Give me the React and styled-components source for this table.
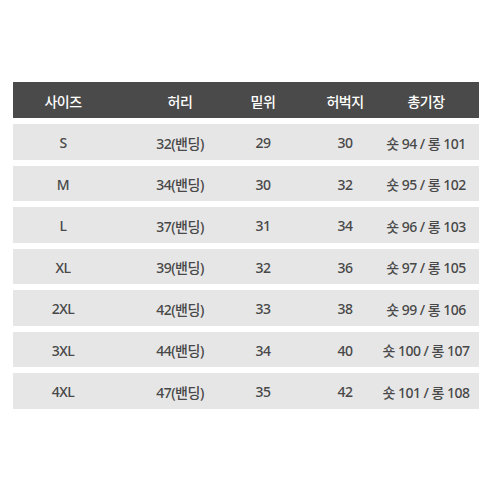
import React from "react";
import styled, { createGlobalStyle } from "styled-components";

const GlobalStyle = createGlobalStyle`
  html, body {
    margin: 0;
    padding: 0;
    background: #ffffff;
  }
  body {
    font-family: "Noto Sans", "Noto Sans CJK KR", sans-serif;
  }
`;

const Page = styled.div`
  width: 492px;
  height: 492px;
  padding: 82px 13px 0 13px;
  box-sizing: border-box;
`;

const Table = styled.div`
  width: 466px;
  display: flex;
  flex-direction: column;
  gap: 6px;
`;

const Body = styled.div`
  display: flex;
  flex-direction: column;
  gap: 6px;
`;

const Row = styled.div`
  display: grid;
  grid-template-columns: 100px 134px 32px 132px 30px;
  height: ${(p) => (p.$head ? "36px" : "35.5px")};
  background: ${(p) => (p.$head ? "#4a4a4a" : "#e6e6e6")};
  color: ${(p) => (p.$head ? "#ffffff" : "#484848")};
`;

const Cell = styled.div`
  display: flex;
  align-items: center;
  justify-content: center;
  white-space: nowrap;
  font-size: 14px;
  font-weight: 500;
  letter-spacing: -0.5px;
  padding-top: 2px;
`;

const head = ["사이즈", "허리", "밑위", "허벅지", "총기장"];
const rows = [
  ["S", "32(밴딩)", "29", "30", "숏 94 / 롱 101"],
  ["M", "34(밴딩)", "30", "32", "숏 95 / 롱 102"],
  ["L", "37(밴딩)", "31", "34", "숏 96 / 롱 103"],
  ["XL", "39(밴딩)", "32", "36", "숏 97 / 롱 105"],
  ["2XL", "42(밴딩)", "33", "38", "숏 99 / 롱 106"],
  ["3XL", "44(밴딩)", "34", "40", "숏 100 / 롱 107"],
  ["4XL", "47(밴딩)", "35", "42", "숏 101 / 롱 108"],
];

export default function App() {
  return (
    <>
      <GlobalStyle />
      <Page>
        <Table>
          <Row $head>
            {head.map((h) => (
              <Cell key={h}>{h}</Cell>
            ))}
          </Row>
          <Body>
            {rows.map((r) => (
              <Row key={r[0]}>
                {r.map((c, i) => (
                  <Cell key={i}>{c}</Cell>
                ))}
              </Row>
            ))}
          </Body>
        </Table>
      </Page>
    </>
  );
}
